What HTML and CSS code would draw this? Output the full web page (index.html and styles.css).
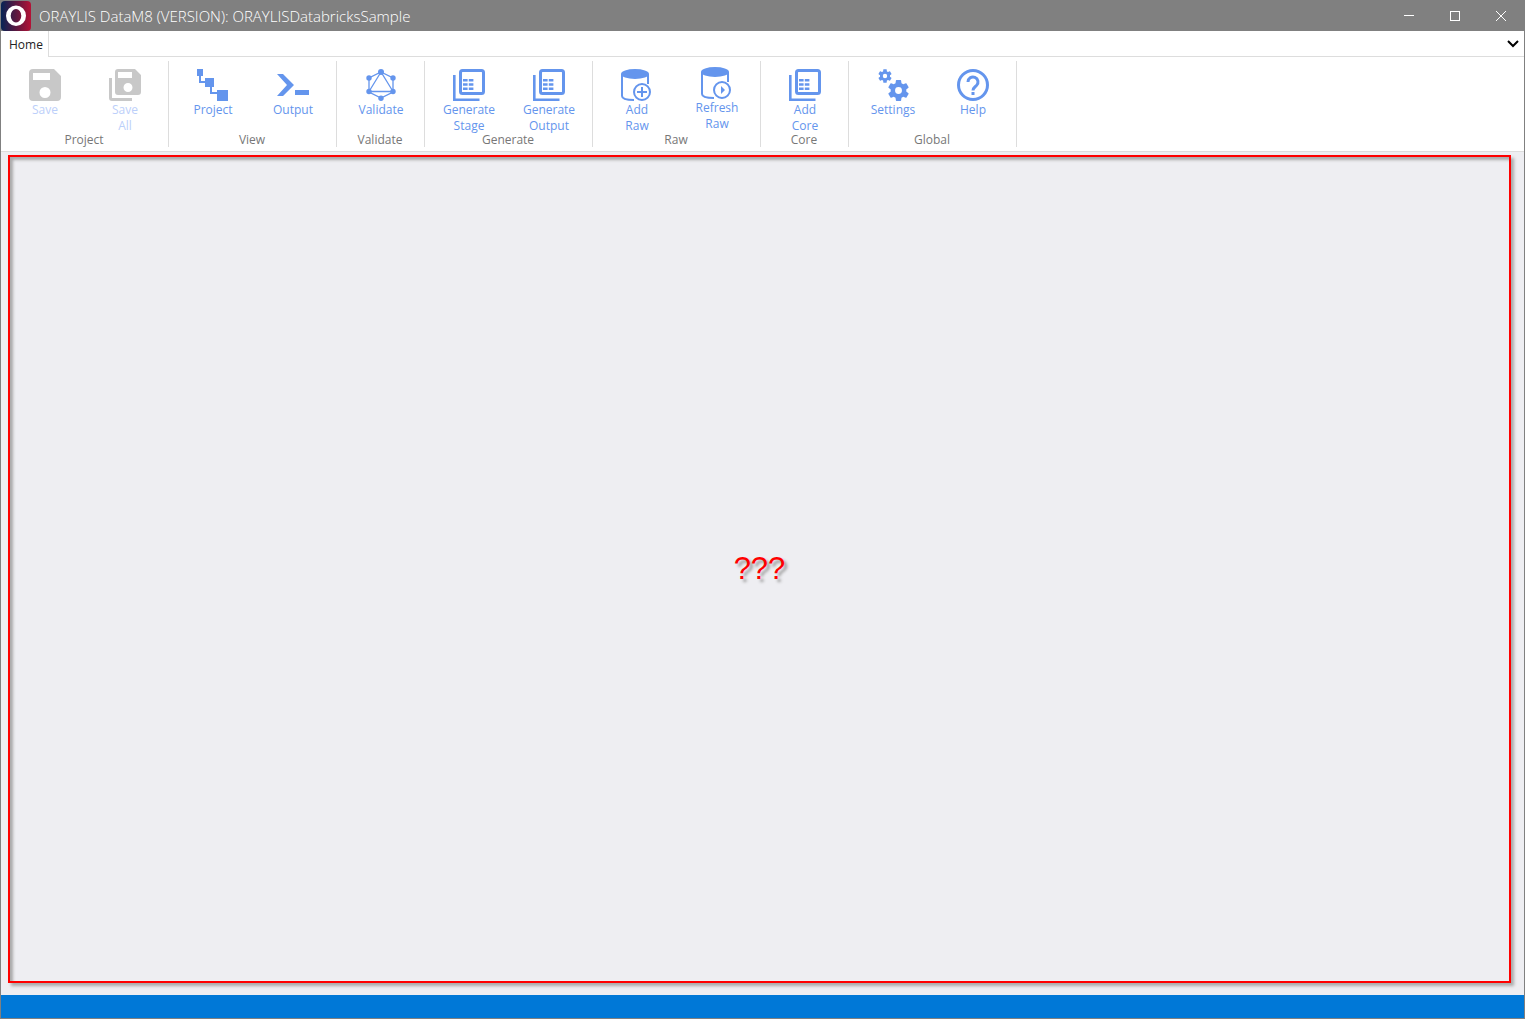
FILE: index.html
```html
<!DOCTYPE html>
<html lang="en">
<head>
<meta charset="utf-8">
<title>ORAYLIS DataM8</title>
<link rel="stylesheet" href="styles.css">
</head>
<body>
<svg class="defs" aria-hidden="true">
  <defs>
    <symbol id="table-stack" viewBox="0 0 32 32">
      <path fill="none" stroke="currentColor" stroke-width="2.600" d="M1.300 6v24.700h25.200"/>
      <rect x="7.500" y="1.500" width="23" height="23" rx="2" fill="none" stroke="currentColor" stroke-width="3"/>
      <path fill="currentColor" d="M10 10h4.600v2.600H10zM15.800 10h4.600v2.600h-4.600zM10 14.200h4.600v2.600H10zM15.800 14.200h4.600v2.600h-4.600zM10 18.400h4.600V21H10zM15.800 18.400h4.600V21h-4.600z"/>
    </symbol>
    <symbol id="cylinder" viewBox="0 0 32 32">
      <path fill="none" stroke="currentColor" stroke-width="2" d="M1 5v22c0 2.500 5 4 12 4M27 5v10"/>
      <ellipse cx="14" cy="5" rx="14" ry="5" fill="currentColor"/>
      <circle cx="21" cy="23" r="8" fill="#fff" stroke="currentColor" stroke-width="2"/>
    </symbol>
    <symbol id="gear" viewBox="0 0 24 24">
      <path fill="currentColor" d="M19.430 12.980c.04-.32.070-.64.070-.98s-.03-.66-.07-.98l2.110-1.650c.19-.15.240-.42.120-.64l-2-3.460c-.12-.22-.39-.3-.61-.22l-2.490 1c-.52-.4-1.080-.73-1.690-.98l-.38-2.650C14.460 2.180 14.250 2 14 2h-4c-.25 0-.46.180-.49.420l-.38 2.650c-.61.250-1.170.590-1.690.980l-2.490-1c-.23-.09-.49 0-.61.220l-2 3.460c-.13.220-.07.490.120.640l2.110 1.650c-.04.320-.07.650-.07.980s.03.660.070.980l-2.110 1.650c-.19.150-.24.420-.12.640l2 3.460c.12.220.390.300.610.220l2.490-1c.52.400 1.080.730 1.690.980l.38 2.650c.03.240.240.420.490.420h4c.25 0 .46-.18.490-.42l.38-2.650c.61-.25 1.170-.59 1.690-.98l2.490 1c.23.090.490 0 .610-.22l2-3.460c.12-.22.070-.49-.12-.64l-2.110-1.650zM12 15.300a3.300 3.300 0 1 1 0-6.600 3.300 3.300 0 0 1 0 6.600z"/>
    </symbol>
  </defs>
</svg>
<div class="window">
  <header class="titlebar">
    <svg class="logo" viewBox="0 0 30 30" aria-hidden="true">
      <defs><linearGradient id="logo-fill" x1="0" y1="0" x2="1" y2="0"><stop offset="0" stop-color="#062455"/><stop offset=".5" stop-color="#5a1840"/><stop offset="1" stop-color="#b51236"/></linearGradient></defs>
      <rect width="30" height="30" rx="4" fill="url(#logo-fill)"/>
      <path fill="#fff" fill-rule="evenodd" d="M15 4.500a10 10.300 0 1 0 0 20.600 10 10.300 0 0 0 0-20.600zM15 8a5.300 6.800 0 1 1 0 13.600A5.300 6.800 0 0 1 15 8z"/>
    </svg>
    <h1 class="title">ORAYLIS DataM8 (VERSION): ORAYLISDatabricksSample</h1>
    <div class="window-controls">
      <button class="control" aria-label="Minimize"><svg viewBox="0 0 10 10"><path d="M0 4.500h10"/></svg></button>
      <button class="control" aria-label="Maximize"><svg viewBox="0 0 10 10"><rect x=".5" y=".5" width="9" height="9"/></svg></button>
      <button class="control" aria-label="Close"><svg viewBox="0 0 10 10"><path d="M0 0l10 10M10 0L0 10"/></svg></button>
    </div>
  </header>

  <nav class="tabs">
    <button class="tab">Home</button>
    <button class="collapse" aria-label="Collapse ribbon"><svg viewBox="0 0 12 8"><path d="M1 1l5 5 5-5"/></svg></button>
  </nav>

  <section class="ribbon" aria-label="Home">
    <div class="group">
      <div class="tools">
        <button class="tool" disabled>
          <svg viewBox="0 0 32 32"><path fill="currentColor" fill-rule="evenodd" d="M4 0h21l7 7v21a4 4 0 0 1-4 4H4a4 4 0 0 1-4-4V4a4 4 0 0 1 4-4zM4 4v7h17V4zM16 18a5 5 0 1 0 0 11 5 5 0 0 0 0-11z"/></svg>
          <span>Save</span>
        </button>
        <button class="tool" disabled>
          <svg viewBox="0 0 32 32"><path fill="none" stroke="currentColor" stroke-width="3" d="M1.500 9v20q0 1.500 1.500 1.500h20"/><path fill="currentColor" fill-rule="evenodd" d="M9 0h17l6 6v17a3 3 0 0 1-3 3H9a3 3 0 0 1-3-3V3a3 3 0 0 1 3-3zM9 3v6h14V3zM19 14a4.500 4.500 0 1 0 0 9 4.500 4.500 0 0 0 0-9z"/></svg>
          <span>Save<br>All</span>
        </button>
      </div>
      <h2 class="caption">Project</h2>
    </div>
    <div class="group">
      <div class="tools">
        <button class="tool">
          <svg viewBox="1 0 32 32"><path fill="currentColor" d="M0 0h7v7H0zM9 9h9v9H9zM21 21h11v11H21z"/><path fill="none" stroke="currentColor" stroke-width="2" d="M4 6v7h6M15 17v7h7"/></svg>
          <span>Project</span>
        </button>
        <button class="tool">
          <svg viewBox="0 0 32 32"><path fill="currentColor" d="M0 5h6l11 11L6 27H0l10-11zM18 21h14v5H18z"/></svg>
          <span>Output</span>
        </button>
      </div>
      <h2 class="caption">View</h2>
    </div>
    <div class="group">
      <div class="tools">
        <button class="tool">
          <svg viewBox="0 0 32 32"><path fill="none" stroke="currentColor" stroke-width="1.300" d="M16 3l12 6v14l-12 6-12-6V9zM16 3L4 22.500h24z"/><g fill="currentColor"><circle cx="16" cy="3" r="3"/><circle cx="28" cy="9" r="2.700"/><circle cx="28" cy="22.500" r="2.700"/><circle cx="16" cy="29.300" r="2.700"/><circle cx="4" cy="22.500" r="2.700"/><circle cx="4" cy="9" r="2.700"/></g></svg>
          <span>Validate</span>
        </button>
      </div>
      <h2 class="caption">Validate</h2>
    </div>
    <div class="group">
      <div class="tools">
        <button class="tool"><svg><use href="#table-stack"/></svg><span>Generate<br>Stage</span></button>
        <button class="tool"><svg><use href="#table-stack"/></svg><span>Generate<br>Output</span></button>
      </div>
      <h2 class="caption">Generate</h2>
    </div>
    <div class="group">
      <div class="tools">
        <button class="tool">
          <svg viewBox="0 0 32 32"><use href="#cylinder"/><path fill="none" stroke="currentColor" stroke-width="2" d="M16 23h10M21 18v10"/></svg>
          <span>Add<br>Raw</span>
        </button>
        <button class="tool raised">
          <svg viewBox="0 0 32 32"><use href="#cylinder"/><path fill="currentColor" d="M20 19l4 4-4 4z"/></svg>
          <span>Refresh<br>Raw</span>
        </button>
      </div>
      <h2 class="caption">Raw</h2>
    </div>
    <div class="group">
      <div class="tools">
        <button class="tool"><svg><use href="#table-stack"/></svg><span>Add<br>Core</span></button>
      </div>
      <h2 class="caption">Core</h2>
    </div>
    <div class="group">
      <div class="tools">
        <button class="tool">
          <svg viewBox="0 0 32 32"><use href="#gear" x="0" y="-1" width="16" height="16"/><use href="#gear" x="9" y="9" width="25" height="25"/></svg>
          <span>Settings</span>
        </button>
        <button class="tool">
          <svg viewBox="0 0 32 32"><circle cx="16" cy="16" r="14.500" fill="none" stroke="currentColor" stroke-width="3"/><path fill="none" stroke="currentColor" stroke-width="3" d="M11 13a5 5 0 1 1 8.500 3.500C17.500 18.500 16 19 16 21.500"/><path fill="currentColor" d="M14.500 23h3v3h-3z"/></svg>
          <span>Help</span>
        </button>
      </div>
      <h2 class="caption">Global</h2>
    </div>
  </section>

  <main class="workspace">
    <div class="placeholder">???</div>
  </main>
  <footer class="statusbar"></footer>
</div>
</body>
</html>
```
FILE: styles.css
```css
* {
  box-sizing: border-box;
}

body {
  margin: 0;
  font-family: "Open Sans", "Noto Sans", sans-serif;
  font-size: 12px;
  line-height: 16px;
}

button {
  padding: 0;
  border: 0;
  background: none;
  color: inherit;
  font: inherit;
}

.defs {
  position: absolute;
  width: 0;
  height: 0;
}

.window {
  display: flex;
  flex-direction: column;
  min-height: 100vh;
  border: 1px solid #808080;
  border-top: 0;
  background: #eeeef2;
}

.titlebar {
  display: flex;
  align-items: center;
  height: 31px;
  background: #808080;
  color: #fff;
}

.logo {
  width: 30px;
  height: 30px;
}

.title {
  flex: 1;
  margin: 0 0 0 8px;
  font-size: 15px;
  font-weight: 300;
  line-height: 30px;
}

.window-controls {
  display: flex;
}

.control {
  display: flex;
  align-items: center;
  justify-content: center;
  width: 46px;
  height: 31px;
}

.control svg {
  width: 10px;
  height: 10px;
  fill: none;
  stroke: #fff;
}

.tabs {
  display: flex;
  justify-content: space-between;
  height: 26px;
  background: linear-gradient(#ddd, #ddd) bottom / 100% 1px no-repeat #fff;
}

.tab {
  padding: 2px 5px 0 8px;
  border-right: 1px solid #ddd;
  background: #fff;
  color: #222;
}

.collapse {
  width: 22px;
}

.collapse svg {
  display: block;
  width: 12px;
  height: 8px;
  margin: 0 auto;
  fill: none;
  stroke: #000;
  stroke-width: 2;
}

.ribbon {
  display: flex;
  height: 95px;
  padding: 4px 0;
  border-bottom: 1px solid #ddd;
  background: #fff;
}

.group {
  display: flex;
  flex-direction: column;
  justify-content: space-between;
  padding: 0 3px 0 4px;
  border-right: 1px solid #ddd;
}

.tools {
  display: flex;
}

.tool {
  display: flex;
  flex-direction: column;
  gap: 1px;
  align-items: center;
  width: 80px;
  height: 72px;
  padding-top: 8px;
  color: #6495ed;
}

.tool svg {
  flex: none;
  width: 32px;
  height: 32px;
}

.tool:disabled svg {
  color: #c8c8c8;
}

.tool:disabled {
  color: #bccffa;
}

.raised {
  padding-top: 6px;
}

.caption {
  margin: 0;
  padding-right: 2px;
  color: #777;
  font-size: 12px;
  font-weight: 400;
  line-height: 14px;
  text-align: center;
}

.workspace {
  display: flex;
  flex: 1;
  padding: 3px 13px 12px 7px;
}

.placeholder {
  display: flex;
  flex: 1;
  align-items: center;
  justify-content: center;
  border: 2px solid #f00;
  box-shadow: 3px 3px 3px #aaa, inset 3px 3px 3px #aaa;
  color: #f00;
  font-family: "Liberation Sans", Arial, sans-serif;
  font-size: 31px;
  line-height: 48px;
  text-shadow: 3px 3px 3px #999;
}

.statusbar {
  height: 23px;
  background: #0078d7;
}
```
